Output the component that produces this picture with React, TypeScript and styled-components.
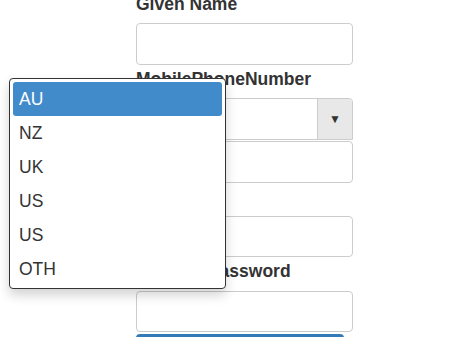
import React from "react";
import styled, { createGlobalStyle } from "styled-components";

const Global = createGlobalStyle`
  html, body { margin: 0; padding: 0; background: #fff; overflow: hidden; }
  body { font-family: "Liberation Sans", Arial, sans-serif; color: #333; }
`;

const Page = styled.div`
  position: relative;
  width: 476px;
  height: 337px;
  overflow: hidden;
`;

const Form = styled.div`
  display: flex;
  flex-direction: column;
  width: 217px;
  margin: -6px 0 0 136px;
`;

const Label = styled.label<{ $gap?: number }>`
  display: block;
  font-size: 17.5px;
  line-height: 20px;
  font-weight: bold;
  color: #333;
  margin-top: 4px;
  margin-bottom: ${(p) => (p.$gap ?? 9)}px;
  &:first-child { margin-top: 0; }
`;

const Input = styled.div<{ $h?: number }>`
  box-sizing: border-box;
  height: ${(p) => p.$h ?? 42}px;
  border: 1px solid #ccc;
  border-radius: 4px;
  background: #fff;
`;

const SelectBox = styled.div`
  box-sizing: border-box;
  height: 42px;
  display: flex;
  border: 1px solid #ccc;
  border-radius: 4px 4px 0 0;
  overflow: hidden;
  margin-bottom: 1px;
`;

const SelectValue = styled.div`
  flex: 1;
  background: #fff;
`;

const SelectArrow = styled.div`
  width: 34px;
  background: #e8e8e8;
  border-left: 1px solid #ccc;
  display: flex;
  align-items: center;
  justify-content: center;
  font-size: 12px;
  color: #333;
`;

const Button = styled.div`
  width: 208px;
  height: 34px;
  margin-top: 2px;
  background: #337ab7;
  border-radius: 4px;
`;

const Dropdown = styled.ul`
  position: absolute;
  left: 9px;
  top: 78px;
  width: 217px;
  height: 211px;
  box-sizing: border-box;
  margin: 0;
  padding: 3px 3px;
  list-style: none;
  background: #fff;
  border: 1px solid #333;
  border-radius: 4px;
  box-shadow: 0 6px 12px rgba(0, 0, 0, 0.175);
`;

const Option = styled.li<{ $active?: boolean }>`
  height: 34px;
  line-height: 34px;
  padding-left: 6px;
  font-size: 17.5px;
  border-radius: 3px;
  color: ${(p) => (p.$active ? "#fff" : "#333")};
  background: ${(p) => (p.$active ? "#428bca" : "transparent")};
`;

const options = ["AU", "NZ", "UK", "US", "US", "OTH"];

export default function App() {
  return (
    <Page>
      <Global />
      <Form>
        <Label>Given Name</Label>
        <Input />
        <Label>MobilePhoneNumber</Label>
        <SelectBox>
          <SelectValue />
          <SelectArrow>▼</SelectArrow>
        </SelectBox>
        <Input />
        <Label>Password</Label>
        <Input $h={41} />
        <Label $gap={10}>Confirm Password</Label>
        <Input $h={41} />
        <Button />
      </Form>
      <Dropdown>
        {options.map((o, i) => (
          <Option key={i} $active={i === 0}>
            {o}
          </Option>
        ))}
      </Dropdown>
    </Page>
  );
}
